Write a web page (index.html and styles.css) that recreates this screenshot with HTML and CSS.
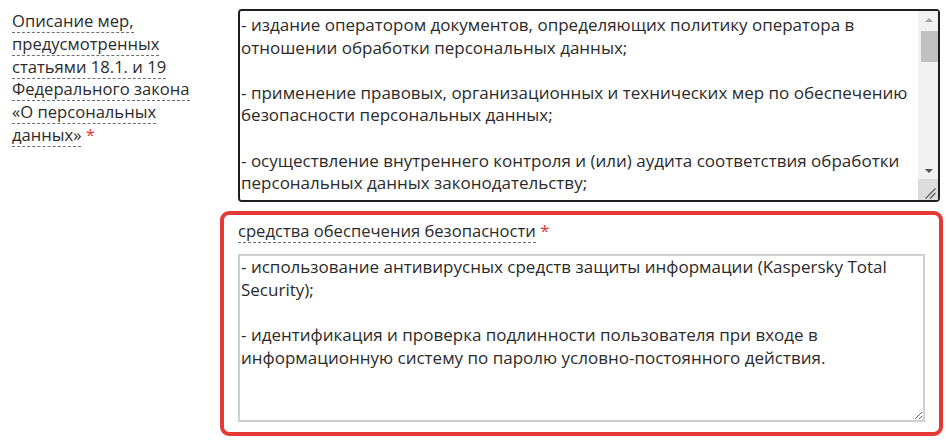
FILE: index.html
```html
<!DOCTYPE html>
<html lang="ru">
<head>
<meta charset="utf-8">
<title>Форма</title>
<link rel="stylesheet" href="styles.css">
</head>
<body>
<div class="row">
  <div class="label-col">
    <span class="hint">Описание мер, предусмотренных статьями 18.1. и 19 Федерального закона «О персональных данных»</span> <span class="req">*</span>
  </div>
  <div class="field-col">
    <div class="field">
      <div class="ta-wrap">
        <textarea class="ta ta-main">- издание оператором документов, определяющих политику оператора в отношении обработки персональных данных;

- применение правовых, организационных и технических мер по обеспечению безопасности персональных данных;

- осуществление внутреннего контроля и (или) аудита соответствия обработки персональных данных законодательству;

- оценка вреда, который может быть причинен субъектам персональных данных в случае нарушения законодательства;

- ознакомление работников оператора, непосредственно осуществляющих обработку персональных данных, с положениями законодательства Российской Федерации о персональных данных, в том числе требованиями к защите персональных данных, документами, определяющими политику оператора в отношении обработки персональных данных;

- назначение лица, ответственного за организацию обработки персональных данных;

- определение угроз безопасности персональных данных при их обработке в информационных системах персональных данных;

- учет машинных носителей персональных данных;

- обнаружение фактов несанкционированного доступа к персональным данным и принятие мер;

- восстановление персональных данных, модифицированных или уничтоженных вследствие несанкционированного доступа к ним;

- установление правил доступа к персональным данным, обрабатываемым в информационной системе персональных данных;

- контроль за принимаемыми мерами по обеспечению безопасности персональных данных и уровня защищенности информационных систем персональных данных.</textarea>
        <div class="sb" aria-hidden="true">
          <div class="sb-btn"><span class="arrow arrow-up"></span></div>
          <div class="sb-track"><div class="sb-thumb"></div></div>
          <div class="sb-btn"><span class="arrow arrow-down"></span></div>
          <div class="sb-corner">
            <svg width="20" height="21" viewBox="0 0 20 21"><path d="M7.5 19.5 L17.5 9.5 M12 19.5 L17.5 14" stroke="#5a5a5a" stroke-width="1.2" fill="none"/></svg>
          </div>
        </div>
      </div>
    </div>
    <div class="field field-alert">
      <div class="sub-label"><span class="hint">средства обеспечения безопасности</span> <span class="req">*</span></div>
      <textarea class="ta ta-sub">- использование антивирусных средств защиты информации (Kaspersky Total Security);

- идентификация и проверка подлинности пользователя при входе в информационную систему по паролю условно-постоянного действия.</textarea>
    </div>
  </div>
</div>
</body>
</html>
```

FILE: styles.css
```css
html, body {
  margin: 0;
  padding: 0;
  background: #fff;
}
body {
  font-family: "Open Sans", "Liberation Sans", sans-serif;
  font-size: 16.6px;
  line-height: 22.8px;
  color: #2b2b2b;
}
.row {
  display: flex;
  padding-top: 9px;
}
.label-col {
  width: 196px;
  padding-left: 12px;
  padding-top: 1px;
}
.hint {
  border-bottom: 1px dashed #6f6f6f;
}
.req {
  color: #e3342f;
}
.field-col {
  width: 723px;
  margin-left: 12px;
  display: flex;
  flex-direction: column;
}
.field {
  padding-left: 18px;
}
.ta {
  display: block;
  box-sizing: border-box;
  font-family: "Open Sans", "Liberation Sans", sans-serif;
  font-size: 17px;
  line-height: 22.6px;
  color: #2b2b2b;
  padding: 2px 1px 1px 1px;
  margin: 0;
  background: #fff;
}
.ta-wrap {
  position: relative;
  width: 702px;
}
.ta-main {
  width: 702px;
  height: 193px;
  padding-top: 3px;
  border: 2px solid #1e1e1e;
  border-radius: 4px;
  padding-right: 22px;
  overflow-y: scroll;
  resize: none;
  scrollbar-width: none;
}
.ta-main::-webkit-scrollbar {
  display: none;
}
.sb {
  position: absolute;
  top: 2px;
  right: 2px;
  bottom: 2px;
  width: 20px;
  display: flex;
  flex-direction: column;
  background: #f1f1f1;
}
.sb-btn {
  height: 17px;
  display: flex;
  align-items: center;
  justify-content: center;
  padding-left: 1px;
}
.arrow {
  width: 0;
  height: 0;
  border-left: 4px solid transparent;
  border-right: 4px solid transparent;
}
.arrow-up {
  border-bottom: 4px solid #a3a3a3;
}
.arrow-down {
  border-top: 4px solid #505050;
}
.sb-track {
  flex: 1;
  padding-top: 3px;
  padding-left: 3px;
}
.sb-thumb {
  height: 31px;
  background: #c1c1c1;
}
.sb-corner {
  height: 21px;
  background: #dcdcdc;
}
.sb-corner svg {
  display: block;
}
.field-alert {
  margin-top: 9px;
  border: 4px solid #e53935;
  border-radius: 9px;
  padding: 5px 14px 10px 14px;
}
.sub-label {
  margin-bottom: 11px;
}
.ta-sub {
  width: 100%;
  height: 168px;
  padding-top: 0;
  line-height: 22.8px;
  border: 2px solid #cfcfcf;
  border-radius: 0;
  overflow: auto;
  resize: vertical;
}
```
